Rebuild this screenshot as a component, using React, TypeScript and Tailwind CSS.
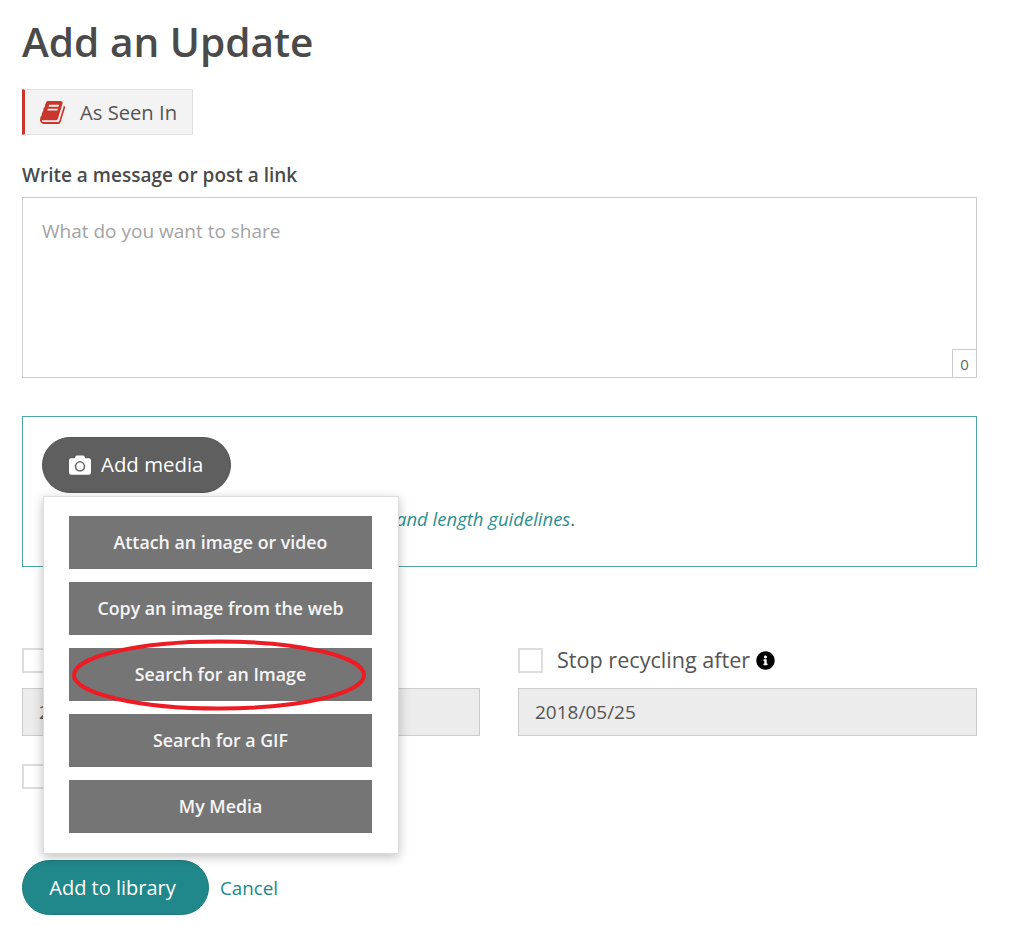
import { FaCamera, FaInfoCircle } from "react-icons/fa";

const menuItems = [
  "Attach an image or video",
  "Copy an image from the web",
  "Search for an Image",
  "Search for a GIF",
  "My Media",
];

function BookIcon() {
  return (
    <svg className="h-[27px] w-[25px] text-[#c9372c]" viewBox="0 0 1664 1792" fill="currentColor">
      <path d="M1639 478q40 57 18 129l-275 906q-19 64-76.500 107.500t-122.500 43.500h-923q-77 0-148.500-53.500t-99.500-131.500q-24-67-2-127 0-4 3-27t4-37q1-8-3-21.500t-3-19.500q2-11 8-21t16.500-23.500 16.500-23.500q23-38 45-91.500t30-91.500q3-10 .5-30t-.5-28q3-11 17-28t17-23q21-36 42-92t25-90q1-9-2.500-32t.5-28q4-13 22-30.500t22-22.500q19-26 42.500-84.500t27.500-96.500q1-8-3-25.500t-2-26.500q2-8 9-18t18-23 17-21q8-12 16.500-30.500t15-35 16-36 19.500-32 26.500-23.500 36-11.500 47.500 5.500l-1 3q38-9 51-9h761q74 0 114 56t18 130l-274 906q-36 119-71.500 153.500t-128.500 34.500h-869q-27 0-38 15-11 16-1 43 24 70 144 70h923q29 0 56-15.500t35-41.500l300-987q7-22 5-57 38 15 59 43zm-1064 2q-4 13 2 22.500t20 9.500h608q13 0 25.500-9.500t16.500-22.500l21-64q4-13-2-22.500t-20-9.500h-608q-13 0-25.500 9.500t-16.500 22.500zm-83 256q-4 13 2 22.500t20 9.500h608q13 0 25.500-9.500t16.500-22.500l21-64q4-13-2-22.500t-20-9.500h-608q-13 0-25.500 9.500t-16.500 22.500z" />
    </svg>
  );
}

export default function App() {
  return (
    <div className="h-[927px] w-[1024px] overflow-hidden bg-white pl-[22px] font-['Open_Sans',sans-serif] text-[#4a4a4a]">
      <h1 className="pt-[14px] text-[40.6px] leading-[56px] font-semibold">Add an Update</h1>

      <div className="mt-[19px] flex h-[46px] w-[171px] items-center border border-l-[3px] border-[#e0e0e0] border-l-[#c9372c] bg-[#f3f3f3] pl-[15px]">
        <BookIcon />
        <span className="ml-[15px] text-[20.2px] text-[#555555]">As Seen In</span>
      </div>

      <label className="mt-[27px] block text-[19px] leading-[26px] font-semibold">Write a message or post a link</label>

      <div className="relative mt-[9px] h-[181px] w-[955px] border border-[#cccccc] px-[19px] pt-[20px] text-[19px] leading-[26px] text-[#a3a3a3]">
        What do you want to share
        <div className="absolute right-0 bottom-0 flex h-[28px] w-[24px] items-center justify-center border-t border-l border-[#cccccc] text-[15px] text-[#666666]">
          0
        </div>
      </div>

      <div className="relative mt-[38px] h-[151px] w-[955px] border border-[#4fa3a3] pt-[20px] pl-[19px]">
        <button className="flex h-[56px] w-[189px] items-center rounded-full border border-[#555555] bg-[#5f5f5f] pb-[1px] pl-[26px] text-[20.4px] text-white">
          <FaCamera className="h-[22px] w-[22px]" />
          <span className="ml-[10px]">Add media</span>
        </button>
        <p className="mt-[13px] pl-[354px] text-[18.5px] leading-[26px] text-[#555555]">
          <em className="text-[#2a8f90]">and length guidelines</em>.
        </p>

        <div className="absolute top-[79px] left-[20px] z-10 flex h-[358px] w-[356px] flex-col gap-[13px] border border-[#dddddd] bg-white pt-[19px] pr-[26px] pl-[25px] shadow-[0_3px_10px_rgba(0,0,0,0.25)]">
          {menuItems.map((item) => (
            <div
              key={item}
              className="flex h-[53px] shrink-0 items-center justify-center bg-[#757575] text-[17.8px] font-semibold text-[#f5f5f5]"
            >
              {item}
            </div>
          ))}
          <svg className="absolute top-[141px] left-[26px] h-[74px] w-[298px]" viewBox="0 0 298 74" fill="none">
            <ellipse cx="149" cy="37" rx="145" ry="33.5" stroke="#ed1c24" strokeWidth="4" />
          </svg>
        </div>
      </div>

      <div className="mt-[81px] grid w-[955px] grid-cols-[458px_459px] gap-x-[38px]">
        <div>
          <div className="h-[25px] w-[25px] border-2 border-[#dddddd]" />
          <div className="mt-[15px] h-[48px] border border-[#cccccc] bg-[#ececec] py-[10px] pl-[16px] text-[19px] leading-[26px] text-[#555555]">
            2018/05/25
          </div>
        </div>
        <div>
          <div className="flex h-[25px] items-center">
            <div className="h-[25px] w-[25px] border-2 border-[#dddddd]" />
            <span className="ml-[14px] text-[21.6px] text-[#555555]">Stop recycling after</span>
            <FaInfoCircle className="ml-[6px] h-[19px] w-[19px] text-black" />
          </div>
          <div className="mt-[15px] h-[48px] border border-[#cccccc] bg-[#ececec] py-[10px] pl-[16px] text-[19px] leading-[26px] text-[#555555]">
            2018/05/25
          </div>
        </div>
      </div>

      <div className="mt-[28px] h-[25px] w-[25px] border-2 border-[#dddddd]" />

      <div className="mt-[71px] flex items-center">
        <button className="h-[55px] w-[187px] rounded-full border border-[#1f7a7c] bg-[#20878a] pr-[6px] text-[20px] text-white">
          Add to library
        </button>
        <a className="ml-[11px] pt-[1px] text-[18.8px] text-[#20878a]">Cancel</a>
      </div>
    </div>
  );
}
